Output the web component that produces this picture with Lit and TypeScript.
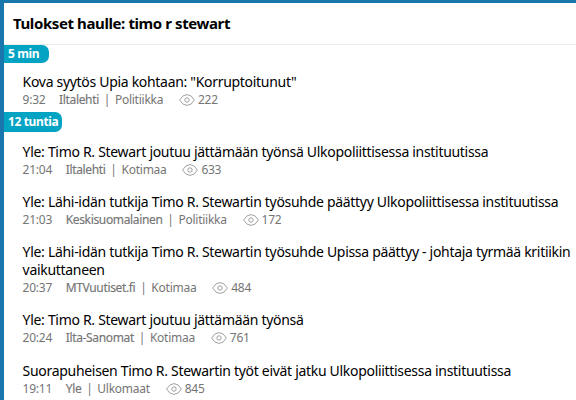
import { LitElement, html, css } from "lit";
import { customElement } from "lit/decorators.js";

interface Item { title: string; time: string; source: string; category: string; views: number; }
interface Group { age: string; items: Item[]; }

const groups: Group[] = [
  { age: "5 min", items: [
    { title: 'Kova syytös Upia kohtaan: "Korruptoitunut"', time: "9:32", source: "Iltalehti", category: "Politiikka", views: 222 },
  ] },
  { age: "12 tuntia", items: [
    { title: "Yle: Timo R. Stewart joutuu jättämään työnsä Ulkopoliittisessa instituutissa", time: "21:04", source: "Iltalehti", category: "Kotimaa", views: 633 },
    { title: "Yle: Lähi-idän tutkija Timo R. Stewartin työsuhde päättyy Ulkopoliittisessa instituutissa", time: "21:03", source: "Keskisuomalainen", category: "Politiikka", views: 172 },
    { title: "Yle: Lähi-idän tutkija Timo R. Stewartin työsuhde Upissa päättyy - johtaja tyrmää kritiikin vaikuttaneen", time: "20:37", source: "MTVuutiset.fi", category: "Kotimaa", views: 484 },
    { title: "Yle: Timo R. Stewart joutuu jättämään työnsä", time: "20:24", source: "Ilta-Sanomat", category: "Kotimaa", views: 761 },
    { title: "Suorapuheisen Timo R. Stewartin työt eivät jatku Ulkopoliittisessa instituutissa", time: "19:11", source: "Yle", category: "Ulkomaat", views: 845 },
  ] },
];

@customElement("app-root")
export class AppRoot extends LitElement {
  static styles = css`
    :host { display: block; box-sizing: border-box; width: 576px; height: 400px; overflow: hidden;
      background: #fff; border-left: 4px solid #1977ad; border-top: 3px solid #1977ad;
      font-family: "Noto Sans", sans-serif; color: #000; }
    .heading { margin: 0; box-sizing: border-box; height: 42px; padding-left: 9px; border-bottom: 1px solid #ebebe6;
      font-size: 15px; font-weight: 700; line-height: 40px; letter-spacing: -0.4px; }
    .age { display: block; width: fit-content; min-width: 45px; box-sizing: border-box; height: 17.5px; padding: 0 4px;
      border-radius: 0 7px 7px 0; background: #03a3c3; color: #fff; font-size: 12px; font-weight: 700;
      line-height: 17px; letter-spacing: -0.38px; }
    .group + .group .age { height: 20px; line-height: 20px; }
    .items { display: flex; flex-direction: column; gap: 14.25px; padding: 10.5px 0 3px 18.6px; }
    .title { font-size: 14px; line-height: 18px; letter-spacing: -0.305px; }
    .meta { display: flex; align-items: center; height: 18px; font-size: 12px; line-height: 18px; color: #757575; letter-spacing: -0.25px; }
    .source { margin-left: 13.7px; letter-spacing: -0.35px; -webkit-text-stroke: 0.15px #757575; }
    .bar { width: 16px; text-align: center; }
    .eye { width: 16px; height: 12px; margin: 0 3px 0 15.8px; fill: none; stroke: #a0a0a0; }
  `;

  render() {
    return html`<h1 class="heading">Tulokset haulle: timo r stewart</h1>
      ${groups.map((g) => html`<section class="group"><span class="age">${g.age}</span>
        <div class="items">${g.items.map((i) => html`<article>
          <div class="title">${i.title}</div>
          <div class="meta">
            <span>${i.time}</span><span class="source">${i.source}</span><span class="bar">|</span><span>${i.category}</span>
            <svg class="eye" viewBox="0 0 16 12"><path d="M.6 6Q3.5.6 8 .6T15.4 6Q12.5 11.4 8 11.4T.6 6Z"/><circle cx="8" cy="6" r="2.2"/></svg>
            <span>${i.views}</span>
          </div>
        </article>`)}</div></section>`)}`;
  }
}
